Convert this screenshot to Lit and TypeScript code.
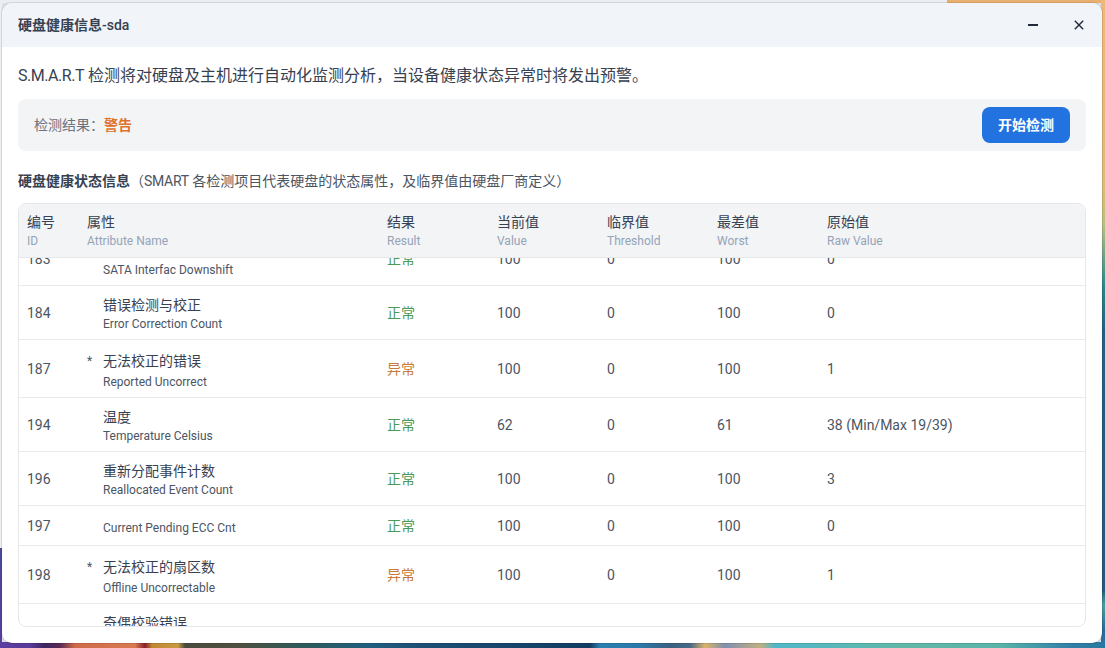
import { LitElement, html, css } from "lit";
import { customElement } from "lit/decorators.js";

interface Row { id: string; cn: string; en: string; bad?: boolean; tall?: boolean; val: string; worst: string; raw: string; }

const ROWS: Row[] = [
  { id: "183", cn: "SATA 接口降速", en: "SATA Interfac Downshift", val: "100", worst: "100", raw: "0" },
  { id: "184", cn: "错误检测与校正", en: "Error Correction Count", val: "100", worst: "100", raw: "0" },
  { id: "187", cn: "无法校正的错误", en: "Reported Uncorrect", bad: true, val: "100", worst: "100", raw: "1" },
  { id: "194", cn: "温度", en: "Temperature Celsius", val: "62", worst: "61", raw: "38 (Min/Max 19/39)" },
  { id: "196", cn: "重新分配事件计数", en: "Reallocated Event Count", val: "100", worst: "100", raw: "3" },
  { id: "197", cn: "", en: "Current Pending ECC Cnt", val: "100", worst: "100", raw: "0" },
  { id: "198", cn: "无法校正的扇区数", en: "Offline Uncorrectable", bad: true, val: "100", worst: "100", raw: "1" },
  { id: "199", cn: "奇偶校验错误", en: "UDMA CRC Error Count", tall: true, val: "100", worst: "100", raw: "0" },
];

const HEAD = [
  ["编号", "ID"], ["属性", "Attribute Name"], ["结果", "Result"], ["当前值", "Value"],
  ["临界值", "Threshold"], ["最差值", "Worst"], ["原始值", "Raw Value"],
];

@customElement("app-root")
export class AppRoot extends LitElement {
  static styles = css`
    :host {
      display: block;
      box-sizing: border-box;
      width: 1105px;
      height: 648px;
      padding: 3px 3px 5px 2px;
      font-family: Roboto, "Noto Sans CJK SC", sans-serif;
      color: #374151;
      background:
        linear-gradient(90deg, #5a3ea0 0, #5a3a9a 30px, #3e2560 45px, #5a2a55 60px, #d06a4a 75px, #d87a50 135px, #8a1f2a 145px, #c08830 152px, #c89a40 178px, #4a4a40 185px, #50503f 235px, #2f5a5a 300px, #1f5f80 370px, #1d4f75 420px, #123c62 590px, #2a80b0 600px, #2a7aa8 640px, #3a6080 670px, #486a88 690px, #dab468 705px, #8090b0 725px, #c0b080 760px, #50b8c8 775px, #60b8a8 900px, #5ab4a8 1000px, #3080a8 1070px, #2a78a0 1105px) bottom / 100% 6px no-repeat,
        linear-gradient(180deg, #efb878 0, #e8b878 100px, #dcbc78 190px, #b8c080 225px, #2a8a8a 285px, #245f85 330px, #24587f 590px, #4aa0a0 605px, #2a6a98 630px, #2a78a0 648px) right / 4px 100% no-repeat,
        linear-gradient(90deg, #eceef1 947px, #e8b070 947px) top / 100% 3px no-repeat,
        linear-gradient(180deg, #eceef1 548px, #4a4a9a 548px, #5a3ea0 648px) left / 2px 100% no-repeat,
        #dfe3e8;
    }
    .modal {
      display: flex;
      flex-direction: column;
      height: 100%;
      background: #fff;
      border-radius: 10px;
      overflow: hidden;
      box-shadow: 0 0 0 1px rgba(0, 0, 0, 0.1);
    }
    .titlebar {
      flex: none;
      height: 44px;
      display: flex;
      align-items: center;
      justify-content: space-between;
      padding: 0 17px 0 16px;
      background: #f1f4f8;
    }
    .title { font-size: 14px; font-weight: 700; color: #374151; line-height: 22px; }
    .title span { font-weight: 500; }
    .win { display: flex; align-items: center; gap: 34px; }
    .win svg { display: block; width: 12px; height: 12px; color: #1f2937; }
    .content {
      flex: 1;
      min-height: 0;
      display: flex;
      flex-direction: column;
      padding: 17px 16px 16px;
    }
    .intro { font-size: 16px; line-height: 24px; color: #374151; margin-bottom: 11px; }
    .intro span { letter-spacing: -0.45px; }
    .result {
      flex: none;
      height: 52px;
      box-sizing: border-box;
      display: flex;
      align-items: center;
      justify-content: space-between;
      padding: 0 16px;
      background: #f3f4f6;
      border-radius: 8px;
      font-size: 14px;
      color: #6b7280;
    }
    .verdict { padding-bottom: 2px; }
    .warn { color: #e0702a; font-weight: 700; }
    .btn {
      width: 88px;
      height: 36px;
      border: 0;
      padding: 0 0 2px;
      border-radius: 8px;
      background: #2272e0;
      color: #fff;
      font: 700 14px Roboto, "Noto Sans CJK SC", sans-serif;
    }
    .section { font-size: 14px; line-height: 22px; margin: 19px 0 11px; color: #4b5563; }
    .section b { color: #374151; font-weight: 700; }
    .section span { letter-spacing: -0.3px; }
    .table {
      flex: 1;
      min-height: 0;
      display: flex;
      flex-direction: column;
      border: 1px solid #e5e7eb;
      border-radius: 8px;
      overflow: hidden;
    }
    .grid {
      display: grid;
      grid-template-columns: 60px 300px 110px 110px 110px 110px 1fr;
      align-items: center;
    }
    .grid > div { padding-left: 8px; }
    .head {
      flex: none;
      height: 53px;
      box-sizing: content-box;
      background: #f3f4f6;
      border-bottom: 1px solid #e5e7eb;
    }
    .h-cn { font-size: 14px; line-height: 20px; color: #374151; }
    .h-en { font-size: 12px; line-height: 18px; color: #94a3b8; }
    .body { flex: 1; min-height: 0; overflow: hidden; }
    .rows { margin-top: -26px; }
    .row { border-bottom: 1px solid #e9ebee; font-size: 14px; color: #4b5563; }
    .name { display: flex; padding: 9px 0 6px 8px; }
    .star { flex: none; width: 16px; font-size: 12px; line-height: 24px; }
    .cn { font-size: 14px; line-height: 20px; color: #374151; }
    .en { font-size: 12px; line-height: 18px; color: #4b5563; }
    .flag .cn { line-height: 24px; }
    .tall .name { padding-bottom: 10px; }
    .blank .name { padding-bottom: 8px; }
    .blank .cn { height: 4px; }
    .ok, .bad { padding-bottom: 2px; }
    .ok { color: #4a9a5a; }
    .bad { color: #c87a3a; }
  `;

  render() {
    return html`
      <div class="modal">
        <div class="titlebar">
          <div class="title">硬盘健康信息<span>-sda</span></div>
          <div class="win">
            <svg viewBox="0 0 12 12"><path d="M1 6h10" stroke="currentColor" stroke-width="2" fill="none"/></svg>
            <svg viewBox="0 0 12 12"><path d="M1.8 1.8l8.4 8.4M10.2 1.8l-8.4 8.4" stroke="currentColor" stroke-width="1.4" fill="none"/></svg>
          </div>
        </div>
        <div class="content">
          <div class="intro"><span>S.M.A.R.T</span> 检测将对硬盘及主机进行自动化监测分析，当设备健康状态异常时将发出预警。</div>
          <div class="result">
            <div class="verdict">检测结果：<span class="warn">警告</span></div>
            <button class="btn">开始检测</button>
          </div>
          <div class="section"><b>硬盘健康状态信息</b>（<span>SMART</span> 各检测项目代表硬盘的状态属性，及临界值由硬盘厂商定义）</div>
          <div class="table">
            <div class="grid head">
              ${HEAD.map(([c, e]) => html`<div><div class="h-cn">${c}</div><div class="h-en">${e}</div></div>`)}
            </div>
            <div class="body">
              <div class="rows">
                ${ROWS.map((r) => html`
                  <div class="grid row ${r.bad ? "flag" : ""} ${r.cn ? "" : "blank"} ${r.tall ? "tall" : ""}">
                    <div>${r.id}</div>
                    <div class="name">
                      <span class="star">${r.bad ? "*" : ""}</span>
                      <div><div class="cn">${r.cn}</div><div class="en">${r.en}</div></div>
                    </div>
                    <div class=${r.bad ? "bad" : "ok"}>${r.bad ? "异常" : "正常"}</div>
                    <div>${r.val}</div>
                    <div>0</div>
                    <div>${r.worst}</div>
                    <div>${r.raw}</div>
                  </div>`)}
              </div>
            </div>
          </div>
        </div>
      </div>
    `;
  }
}
